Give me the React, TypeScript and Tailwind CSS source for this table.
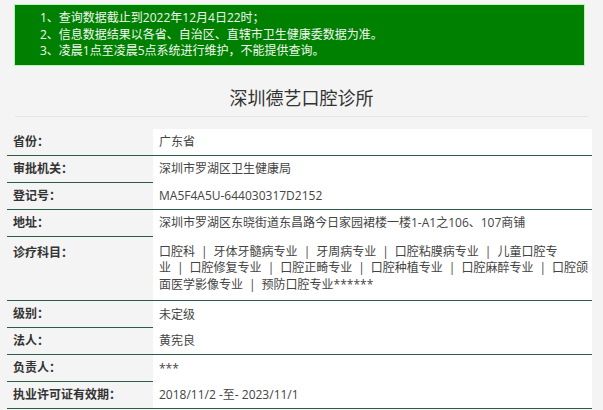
const font = { fontFamily: '"Open Sans", "Noto Sans CJK SC", sans-serif' };

type Row = { label: string; value: React.ReactNode; full: boolean; tall?: boolean };

const subjects1 = ["口腔科", "牙体牙髓病专业", "牙周病专业", "口腔粘膜病专业", "儿童口腔专"];
const subjects2 = ["业", "口腔修复专业", "口腔正畸专业", "口腔种植专业", "口腔麻醉专业", "口腔颌"];
const subjects3 = ["面医学影像专业", "预防口腔专业******"];

function Line({ items }: { items: string[] }) {
  return (
    <div className="whitespace-nowrap">
      {items.map((s, i) => (
        <span key={i}>
          {i > 0 && <span className="mx-[6px]">|</span>}
          {s}
        </span>
      ))}
    </div>
  );
}

const rows: Row[] = [
  { label: "省份：", value: "广东省", full: true },
  { label: "审批机关：", value: "深圳市罗湖区卫生健康局", full: false },
  { label: "登记号：", value: "MA5F4A5U-644030317D2152", full: true },
  { label: "地址：", value: "深圳市罗湖区东晓街道东昌路今日家园裙楼一楼1-A1之106、107商铺", full: false },
  {
    label: "诊疗科目：",
    value: (
      <>
        <Line items={subjects1} />
        <Line items={subjects2} />
        <Line items={subjects3} />
      </>
    ),
    full: true,
    tall: true,
  },
  { label: "级别：", value: "未定级", full: false },
  { label: "法人：", value: "黄宪良", full: true },
  { label: "负责人：", value: "***", full: false },
  { label: "执业许可证有效期：", value: "2018/11/2 -至- 2023/11/1", full: true },
];

export default function App() {
  return (
    <div className="min-h-[410px] w-[603px] bg-[#f4f4f4] pt-[4px] text-[12px]" style={font}>
      {/* notice */}
      <div className="ml-[14px] w-[571px] border border-[#b9f3b4] bg-[#008000] py-[5px] pl-[25px] leading-[16.5px] text-[#f2f8f0]">
        <div>1、查询数据截止到2022年12月4日22时；</div>
        <div>2、信息数据结果以各省、自治区、直辖市卫生健康委数据为准。</div>
        <div>3、凌晨1点至凌晨5点系统进行维护，不能提供查询。</div>
      </div>

      {/* title */}
      <div className="mx-[15px] mt-[20px] border-b border-[#e4e4e4] pb-[6px] text-center text-[18px] leading-[24px] text-[#333]">
        深圳德艺口腔诊所
      </div>

      {/* details */}
      <div className="ml-[7px] mt-[12px] w-[585px]">
        {rows.map((r) => (
          <div key={r.label} className="flex">
            <div
              className={`w-[146px] shrink-0 border-b border-[#2b5e48] pl-[6px] font-semibold text-[#333] ${
                r.tall ? "pt-[8px] leading-[16.5px]" : "flex h-[27px] items-center"
              }`}
            >
              {r.label}
            </div>
            <div
              className={`flex-1 bg-white pl-[6px] text-[#444] ${r.full ? "border-b border-[#2b5e48]" : ""} ${
                r.tall ? "py-[7px] leading-[16.5px]" : "flex h-[27px] items-center"
              }`}
            >
              {r.value}
            </div>
          </div>
        ))}
      </div>
    </div>
  );
}
